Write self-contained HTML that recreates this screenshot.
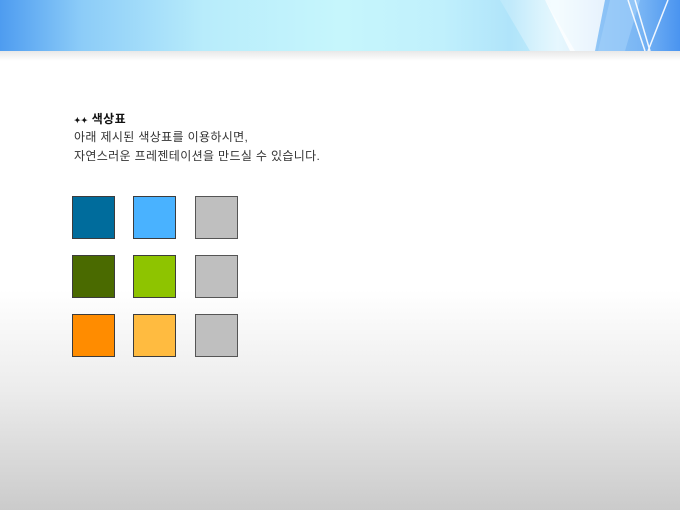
<!DOCTYPE html>
<html><head><meta charset="utf-8"><style>
html,body{margin:0;padding:0}
body{width:680px;height:510px;position:relative;overflow:hidden;
background:linear-gradient(to bottom,#fff 0,#fff 290px,#ececec 390px,#cbcbcb 510px);
font-family:"Liberation Sans","Noto Sans CJK KR","NanumGothic",sans-serif;}
.hdr{position:absolute;left:0;top:0;width:680px;height:51px;
background:linear-gradient(to right,#4e9cf0 0%,#8cccf8 12%,#b8ecfb 30%,#c6f6fc 50%,#c0f0fc 65%,#b0e4fa 75%,#c8eefc 82%,#8ec4f6 88%,#7ab6f4 94%,#4a94f0 100%);overflow:hidden}
.sh{position:absolute;left:0;top:51px;width:680px;height:10px;background:linear-gradient(#e8e8e8,#fff)}
.sq{position:absolute;width:41px;height:41px;border:1px solid #3c3c3c}
.t{position:absolute;left:74px;font-size:12px;letter-spacing:0.35px;color:#333;white-space:nowrap}
</style></head><body>
<div class="hdr">
<svg width="680" height="51" style="position:absolute;left:0;top:0">
<defs><linearGradient id="g" x1="0" x2="1"><stop offset="0" stop-color="#fff" stop-opacity="0.2"/><stop offset="1" stop-color="#fff" stop-opacity="0.95"/></linearGradient></defs>
<polygon points="500,0 545,0 575,51 530,51" fill="url(#g)" opacity="0.7"/>
<polygon points="545,0 605,0 595,51 570,51" fill="#fff" opacity="0.8"/>
<polygon points="610,0 640,0 625,51 598,51" fill="#a4d0fa" opacity="0.6"/>
<path d="M628,0 L645,51 M635,0 L650,51 M668,0 L648,51" stroke="#fff" stroke-width="1.5" fill="none" opacity="0.9"/>
</svg>
</div>
<div class="sh"></div>
<div class="t" style="top:110px;font-weight:bold;color:#111"><span style="font-size:8px">✦✦</span> 색상표</div>
<div class="t" style="top:128px">아래 제시된 색상표를 이용하시면,</div>
<div class="t" style="top:147px">자연스러운 프레젠테이션을 만드실 수 있습니다.</div>
<div class="sq" style="left:72px;top:196px;background:#006c9c"></div>
<div class="sq" style="left:133px;top:196px;background:#49b2ff"></div>
<div class="sq" style="left:195px;top:196px;background:#bfbfbf;border-color:#555"></div>
<div class="sq" style="left:72px;top:255px;background:#4a6a00"></div>
<div class="sq" style="left:133px;top:255px;background:#8ec400"></div>
<div class="sq" style="left:195px;top:255px;background:#bfbfbf;border-color:#555"></div>
<div class="sq" style="left:72px;top:314px;background:#ff8c00"></div>
<div class="sq" style="left:133px;top:314px;background:#ffbb40"></div>
<div class="sq" style="left:195px;top:314px;background:#bfbfbf;border-color:#555"></div>
</body></html>
